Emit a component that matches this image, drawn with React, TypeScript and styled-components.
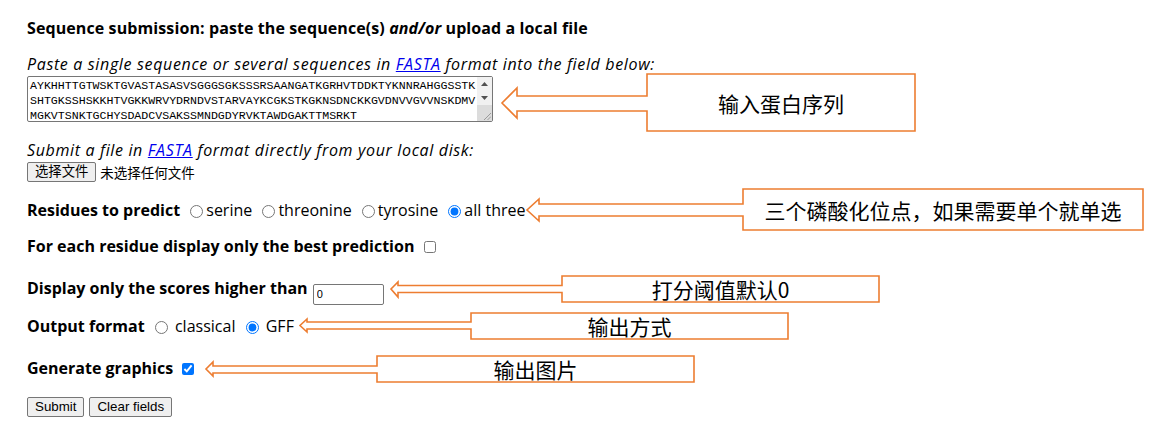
import React from "react";
import styled, { createGlobalStyle } from "styled-components";

const Global = createGlobalStyle`
  html, body { margin: 0; padding: 0; background: #ffffff; }
  body { font-family: "Open Sans", "Noto Sans CJK SC", sans-serif; color: #000; }
`;

const Page = styled.div`
  position: relative;
  width: 1176px;
  height: 444px;
  box-sizing: border-box;
  padding: 18px 0 0 27px;
  font-size: 16px;
  overflow: hidden;
`;

const Title = styled.div`
  font-weight: 700;
  height: 20px;
  line-height: 20px;
  letter-spacing: 0.1px;
  em { font-style: italic; }
`;

const Note = styled.div<{ $mt: number }>`
  font-style: italic;
  font-size: 16px;
  letter-spacing: 0.65px;
  height: 20px;
  line-height: 20px;
  margin-top: ${(p) => p.$mt}px;
  a { color: #0000ee; text-decoration: underline; }
`;

const SeqWrap = styled.div`
  position: relative;
  margin-top: 2px;
  width: 466px;
  height: 46px;
`;

const SeqArea = styled.textarea`
  box-sizing: border-box;
  display: block;
  width: 466px;
  height: 46px;
  margin: 0;
  padding: 1px 2px;
  border: 1px solid #767676;
  border-radius: 2px;
  resize: none;
  overflow: hidden;
  font-family: "Liberation Mono", "Courier New", monospace;
  font-size: 11.6px;
  line-height: 15px;
  color: #000;
  white-space: pre;
`;

const ScrollBar = styled.div`
  position: absolute;
  right: 1px;
  top: 1px;
  bottom: 1px;
  width: 15px;
  background: #f1f1f1;
  display: flex;
  flex-direction: column;
  align-items: center;
`;

const ScrollArrow = styled.div`
  height: 14px;
  display: flex;
  align-items: center;
  justify-content: center;
`;

const ScrollThumb = styled.div`
  flex: 1;
  width: 100%;
  background: #dcdcdc;
  position: relative;
`;

const Grip = styled.svg`
  position: absolute;
  right: 1px;
  bottom: 1px;
`;

const FileRow = styled.div`
  margin-top: 2px;
  height: 20px;
  display: flex;
  align-items: center;
  gap: 4px;
  font-family: "Noto Sans CJK SC", sans-serif;
  font-size: 13.5px;
`;

const NativeButton = styled.button`
  box-sizing: border-box;
  height: 20px;
  padding: 0 7px;
  margin: 0;
  border: 1px solid #767676;
  border-radius: 2px;
  background: #efefef;
  color: #000;
  font-family: "Liberation Sans", "Noto Sans CJK SC", sans-serif;
  font-size: 13.33px;
  line-height: 18px;
`;

const Row = styled.div<{ $mt: number; $h?: number }>`
  margin-top: ${(p) => p.$mt}px;
  height: ${(p) => p.$h ?? 20}px;
  line-height: ${(p) => p.$h ?? 20}px;
  white-space: nowrap;
`;

const Label = styled.b`
  font-weight: 700;
`;

const Radio = styled.input.attrs({ type: "radio" })`
  width: 13px;
  height: 13px;
  margin: 0 3px 0 6px;
  vertical-align: -2px;
  accent-color: #0075ff;
`;

const Check = styled.input.attrs({ type: "checkbox" })`
  width: 12px;
  height: 12px;
  margin: 0 3px 0 5px;
  vertical-align: -1px;
  accent-color: #0075ff;
`;

const NumberBox = styled.input`
  box-sizing: border-box;
  width: 71px;
  height: 21px;
  margin: 0 0 0 1px;
  padding: 0 3px;
  border: 1px solid #767676;
  border-radius: 2px;
  font-family: "Liberation Sans", sans-serif;
  font-size: 11px;
  vertical-align: -4px;
`;

const ButtonRow = styled.div`
  margin-top: 19px;
  display: flex;
  gap: 5px;
`;

/* ---------- annotation callouts ---------- */

type CalloutSpec = {
  tipX: number;
  tipY: number;
  headX: number;
  headT: number;
  headB: number;
  shaftT: number;
  shaftB: number;
  boxL: number;
  boxT: number;
  boxR: number;
  boxB: number;
  text: string;
};

const CalloutWrap = styled.div`
  position: absolute;
  pointer-events: none;
`;

const CalloutSvg = styled.svg`
  position: absolute;
  left: 0;
  top: 0;
  overflow: visible;
`;

const CalloutText = styled.div`
  position: absolute;
  display: flex;
  align-items: center;
  justify-content: center;
  font-family: "Noto Sans CJK SC", sans-serif;
  font-size: 21px;
  color: #000;
  white-space: nowrap;
`;

function Callout({ c }: { c: CalloutSpec }) {
  const x0 = c.tipX - 2;
  const y0 = Math.min(c.boxT, c.headT) - 2;
  const w = c.boxR - x0 + 2;
  const h = Math.max(c.boxB, c.headB) - y0 + 2;
  const pts: [number, number][] = [
    [c.boxL, c.boxT],
    [c.boxR, c.boxT],
    [c.boxR, c.boxB],
    [c.boxL, c.boxB],
    [c.boxL, c.shaftB],
    [c.headX, c.shaftB],
    [c.headX, c.headB],
    [c.tipX, c.tipY],
    [c.headX, c.headT],
    [c.headX, c.shaftT],
    [c.boxL, c.shaftT],
  ];
  const d = pts.map(([x, y]) => `${x - x0},${y - y0}`).join(" ");
  return (
    <CalloutWrap style={{ left: x0, top: y0, width: w, height: h }}>
      <CalloutSvg width={w} height={h}>
        <polygon points={d} fill="#ffffff" stroke="#ED7D31" strokeWidth={1.6} strokeLinejoin="miter" />
      </CalloutSvg>
      <CalloutText
        style={{
          left: c.boxL - x0,
          top: c.boxT - y0,
          width: c.boxR - c.boxL,
          height: c.boxB - c.boxT,
        }}
      >
        {c.text}
      </CalloutText>
    </CalloutWrap>
  );
}

const callouts: CalloutSpec[] = [
  { tipX: 502, tipY: 103, headX: 517, headT: 88, headB: 118, shaftT: 96, shaftB: 111, boxL: 647, boxT: 74, boxR: 915, boxB: 131, text: "输入蛋白序列" },
  { tipX: 527, tipY: 210, headX: 539, headT: 199, headB: 221, shaftT: 204, shaftB: 216, boxL: 743, boxT: 189, boxR: 1143, boxB: 230, text: "三个磷酸化位点，如果需要单个就单选" },
  { tipX: 391, tipY: 289, headX: 398, headT: 282, headB: 297, shaftT: 285.5, shaftB: 292.5, boxL: 562, boxT: 276, boxR: 879, boxB: 302, text: "打分阈值默认0" },
  { tipX: 300, tipY: 325.5, headX: 307, headT: 319, headB: 332, shaftT: 322, shaftB: 329, boxL: 471, boxT: 313, boxR: 788, boxB: 339, text: "输出方式" },
  { tipX: 206, tipY: 369, headX: 213, headT: 362, headB: 376, shaftT: 366, shaftB: 373, boxL: 377, boxT: 356, boxR: 694, boxB: 382, text: "输出图片" },
];

const SEQ =
  "AYKHHTTGTWSKTGVASTASASVSGGGSGKSSSRSAANGATKGRHVTDDKTYKNNRAHGGSSTK\n" +
  "SHTGKSSHSKKHTVGKKWRVYDRNDVSTARVAYKCGKSTKGKNSDNCKKGVDNVVGVVNSKDMV\n" +
  "MGKVTSNKTGCHYSDADCVSAKSSMNDGDYRVKTAWDGAKTTMSRKT";

export default function App() {
  return (
    <>
      <Global />
      <Page>
        <Title>
          Sequence submission: paste the sequence(s) <em>and/or</em> upload a local file
        </Title>
        <Note $mt={16}>
          Paste a single sequence or several sequences in <a href="#">FASTA</a> format into the field below:
        </Note>
        <SeqWrap>
          <SeqArea defaultValue={SEQ} spellCheck={false} />
          <ScrollBar>
            <ScrollArrow>
              <svg width="7" height="4" viewBox="0 0 7 4"><polygon points="0,4 3.5,0 7,4" fill="#505050" /></svg>
            </ScrollArrow>
            <ScrollArrow>
              <svg width="7" height="4" viewBox="0 0 7 4"><polygon points="0,0 7,0 3.5,4" fill="#505050" /></svg>
            </ScrollArrow>
            <ScrollThumb>
              <Grip width="8" height="8" viewBox="0 0 8 8">
                <line x1="1" y1="8" x2="8" y2="1" stroke="#9a9a9a" strokeWidth="1" />
                <line x1="4.5" y1="8" x2="8" y2="4.5" stroke="#9a9a9a" strokeWidth="1" />
              </Grip>
            </ScrollThumb>
          </ScrollBar>
        </SeqWrap>
        <Note $mt={18}>
          Submit a file in <a href="#">FASTA</a> format directly from your local disk:
        </Note>
        <FileRow>
          <NativeButton type="button">选择文件</NativeButton>
          <span>未选择任何文件</span>
        </FileRow>
        <Row $mt={18}>
          <Label>Residues to predict</Label> <Radio name="res" />serine <Radio name="res" />threonine{" "}
          <Radio name="res" />tyrosine <Radio name="res" defaultChecked />all three
        </Row>
        <Row $mt={16}>
          <Label>For each residue display only the best prediction</Label> <Check />
        </Row>
        <Row $mt={22} $h={21}>
          <Label>Display only the scores higher than</Label> <NumberBox type="text" defaultValue="0" />
        </Row>
        <Row $mt={17}>
          <Label>Output format</Label> <Radio name="fmt" /> classical <Radio name="fmt" defaultChecked /> GFF
        </Row>
        <Row $mt={22}>
          <Label>Generate graphics</Label> <Check defaultChecked />
        </Row>
        <ButtonRow>
          <NativeButton type="button">Submit</NativeButton>
          <NativeButton type="button">Clear fields</NativeButton>
        </ButtonRow>
        {callouts.map((c, i) => (
          <Callout key={i} c={c} />
        ))}
      </Page>
    </>
  );
}
